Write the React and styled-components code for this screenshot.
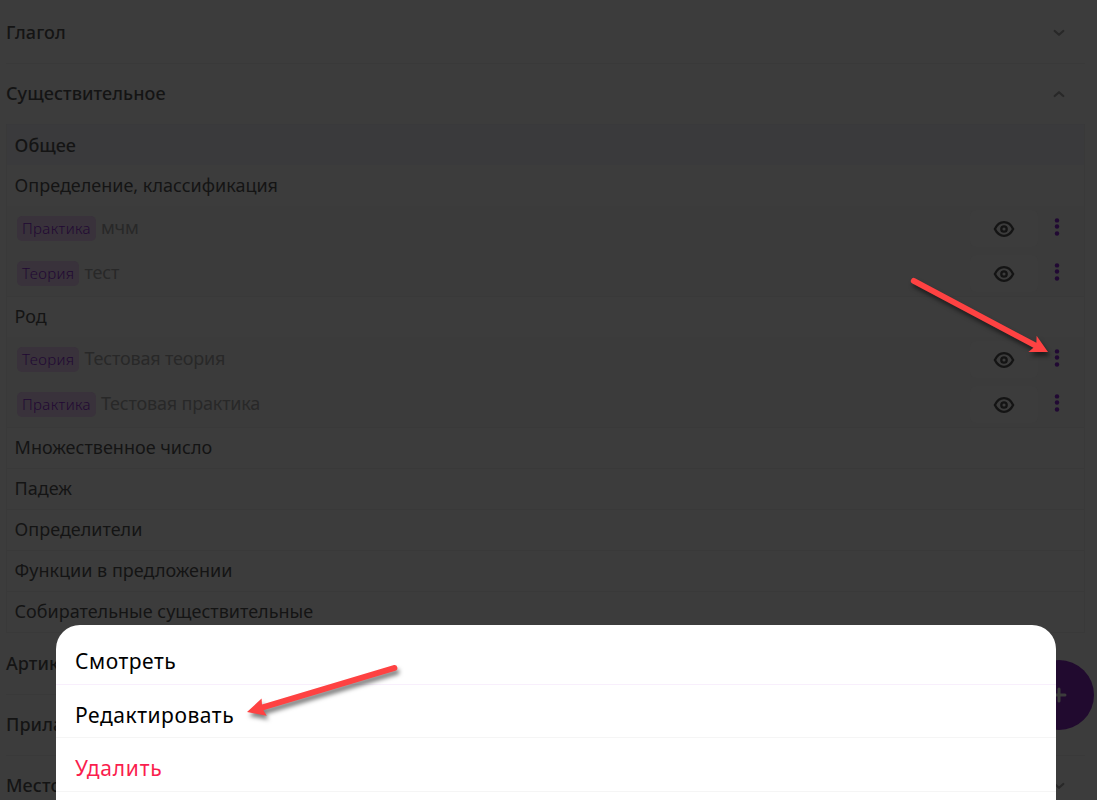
import React from "react";
import styled, { createGlobalStyle } from "styled-components";

const topics = [
  {
    title: "Определение, классификация",
    items: [
      { type: "Практика", name: "мчм" },
      { type: "Теория", name: "тест" },
    ],
  },
  {
    title: "Род",
    items: [
      { type: "Теория", name: "Тестовая теория" },
      { type: "Практика", name: "Тестовая практика" },
    ],
  },
  { title: "Множественное число", items: [] },
  { title: "Падеж", items: [] },
  { title: "Определители", items: [] },
  { title: "Функции в предложении", items: [] },
  { title: "Собирательные существительные", items: [] },
];

const Chevron = ({ up }) => (
  <ChevronIcon $up={up} viewBox="0 0 12 8">
    <path d="M1.7 2 L6 5.8 L10.3 2" />
  </ChevronIcon>
);

const Eye = () => (
  <EyeIcon viewBox="0 0 22 18">
    <path d="M1.9 9 C4 4.6 7.2 2.2 11 2.2 S18 4.6 20.1 9 C18 13.4 14.8 15.8 11 15.8 S4 13.4 1.9 9 Z" />
    <circle cx="11" cy="9" r="2.7" />
  </EyeIcon>
);

const Dots = () => (
  <DotsIcon viewBox="0 0 6 18">
    <circle cx="3" cy="2.4" r="2.2" />
    <circle cx="3" cy="8.5" r="2.2" />
    <circle cx="3" cy="15.5" r="2.2" />
  </DotsIcon>
);

const Section = ({ title, open }) => (
  <SectionHeader $open={open}>
    <span>{title}</span>
    <Chevron up={open} />
  </SectionHeader>
);

const App = () => {
  return (
    <Page>
      <GlobalStyle />
      <Content>
        <Section title="Глагол" />
        <Section title="Существительное" open />
        <TopicBox>
          <GroupTitle>Общее</GroupTitle>
          {topics.map((topic, index) => (
            <div key={topic.title}>
              <TopicTitle $first={index === 0}>{topic.title}</TopicTitle>
              {topic.items.length > 0 && (
                <Lessons>
                  {topic.items.map((item) => (
                    <Lesson key={item.name}>
                      <Tag>{item.type}</Tag>
                      <LessonName>{item.name}</LessonName>
                      <ViewButton>
                        <Eye />
                      </ViewButton>
                      <MoreButton>
                        <Dots />
                      </MoreButton>
                    </Lesson>
                  ))}
                </Lessons>
              )}
            </div>
          ))}
        </TopicBox>
        <Section title="Артикль" />
        <Section title="Прилагательное" />
        <Section title="Местоимение" />
      </Content>

      <AddButton>
        <svg width="16" height="16" viewBox="0 0 16 16">
          <path d="M8 2V14M2 8H14" />
        </svg>
      </AddButton>

      <Sheet>
        <SheetItem $first>Смотреть</SheetItem>
        <SheetItem>Редактировать</SheetItem>
        <SheetItem $danger>Удалить</SheetItem>
      </Sheet>

      <Arrow $left={900} $top={268} width="160" height="100" viewBox="900 268 160 100">
        <path d="M915 278.2 L1036.4 342.8 L1036.6 335.8 L1048 352 L1028.4 352 L1033.4 347.8 L912.4 283.6 A3 3 0 0 1 915 278.2 Z" />
      </Arrow>
      <Arrow $left={240} $top={655} width="170" height="80" viewBox="240 655 170 80">
        <path d="M394 665 L262 704.4 L261.6 698.6 L247 712 L266.7 715.7 L263.4 710.2 L395.4 670.8 A3 3 0 0 0 394 665 Z" />
      </Arrow>
    </Page>
  );
};

const GlobalStyle = createGlobalStyle`
  * {
    box-sizing: border-box;
  }

  body {
    margin: 0;
    background: #3c3c3c;
    font-family: "Noto Sans", sans-serif;
    overflow: hidden;
  }
`;

const Page = styled.div`
  position: relative;
  height: 800px;
  overflow: hidden;
  background: #3c3c3c;
`;

const Content = styled.main`
  padding: 3px 12px 0 6px;
`;

const SectionHeader = styled.div`
  display: flex;
  justify-content: space-between;
  align-items: center;
  height: 61px;
  padding: 0 20px 2px 0;
  border-bottom: 1px solid ${(props) => (props.$open ? "transparent" : "#393939")};
  color: #141414;
  font-size: 18px;
  font-weight: 500;
  letter-spacing: 0.08px;
`;

const ChevronIcon = styled.svg`
  width: 12px;
  height: 8px;
  margin-top: 2px;
  transform: ${(props) => (props.$up ? "rotate(180deg)" : "none")};
  fill: none;
  stroke: #282828;
  stroke-width: 2.2;
  stroke-linecap: round;
  stroke-linejoin: round;
`;

const TopicBox = styled.section`
  margin: -1px 0 1px;
  border: 1px solid #393939;
  border-top-color: #39393b;
  color: #141414;
  font-size: 18px;
`;

const GroupTitle = styled.div`
  height: 40px;
  padding-left: 7.6px;
  background: #3a3a3c;
  font-weight: 500;
  line-height: 40px;
`;

const TopicTitle = styled.div`
  height: 41px;
  padding-left: 7.6px;
  border-top: 1px solid ${(props) => (props.$first ? "transparent" : "#393939")};
  line-height: 38px;
`;

const Lessons = styled.div`
  height: 90px;
  background: #3b3b3b;
`;

const Lesson = styled.div`
  display: flex;
  align-items: center;
  height: 45px;
  padding-left: 10px;
`;

const Tag = styled.span`
  height: 25px;
  padding: 0 5px;
  border-radius: 5px;
  background: #39323b;
  color: #210933;
  font-size: 15px;
  font-weight: 300;
  letter-spacing: 0.37px;
  line-height: 25px;
`;

const LessonName = styled.span`
  flex: 1;
  margin: -3px 0 0 5px;
  color: #282828;
  font-size: 18px;
  letter-spacing: -0.18px;
`;

const ViewButton = styled.div`
  display: flex;
  justify-content: center;
  align-items: center;
  width: 68px;
  height: 37px;
  border-radius: 6px;
  background: #3c3c3c;
`;

const EyeIcon = styled.svg`
  width: 22px;
  height: 18px;
  margin-top: 1px;
  fill: none;
  stroke: #141414;
  stroke-width: 2.3;
`;

const MoreButton = styled.div`
  display: flex;
  justify-content: center;
  width: 38px;
  margin: -3px 8px 0 0;
`;

const DotsIcon = styled.svg`
  width: 6px;
  height: 18px;
  fill: #210933;
`;

const AddButton = styled.div`
  position: absolute;
  top: 660px;
  left: 1024px;
  display: flex;
  justify-content: center;
  align-items: center;
  width: 70px;
  height: 70px;
  border-radius: 50%;
  background: #210a2f;

  path {
    stroke: #3c3c3c;
    stroke-width: 3;
    stroke-linecap: round;
  }
`;

const Sheet = styled.div`
  position: absolute;
  top: 625px;
  left: 56px;
  width: 1000px;
  height: 200px;
  padding-top: 6px;
  border-radius: 24px 24px 0 0;
  background: #fff;
`;

const SheetItem = styled.div`
  height: ${(props) => (props.$first || props.$danger ? "54px" : "53px")};
  padding: 4px 19px 0;
  border-bottom: 1px solid ${(props) => (props.$first ? "#f8effc" : "#f5f5f5")};
  color: ${(props) => (props.$danger ? "#fa1e4e" : "#000")};
  font-size: 21px;
  letter-spacing: ${(props) => (props.$danger ? "0.8px" : "0.55px")};
  line-height: 53px;
`;

const Arrow = styled.svg`
  position: absolute;
  top: ${(props) => props.$top}px;
  left: ${(props) => props.$left}px;
  overflow: visible;
  fill: #fe4242;
  filter: drop-shadow(2px 4px 2px rgba(0, 0, 0, 0.5));
`;

export default App;
